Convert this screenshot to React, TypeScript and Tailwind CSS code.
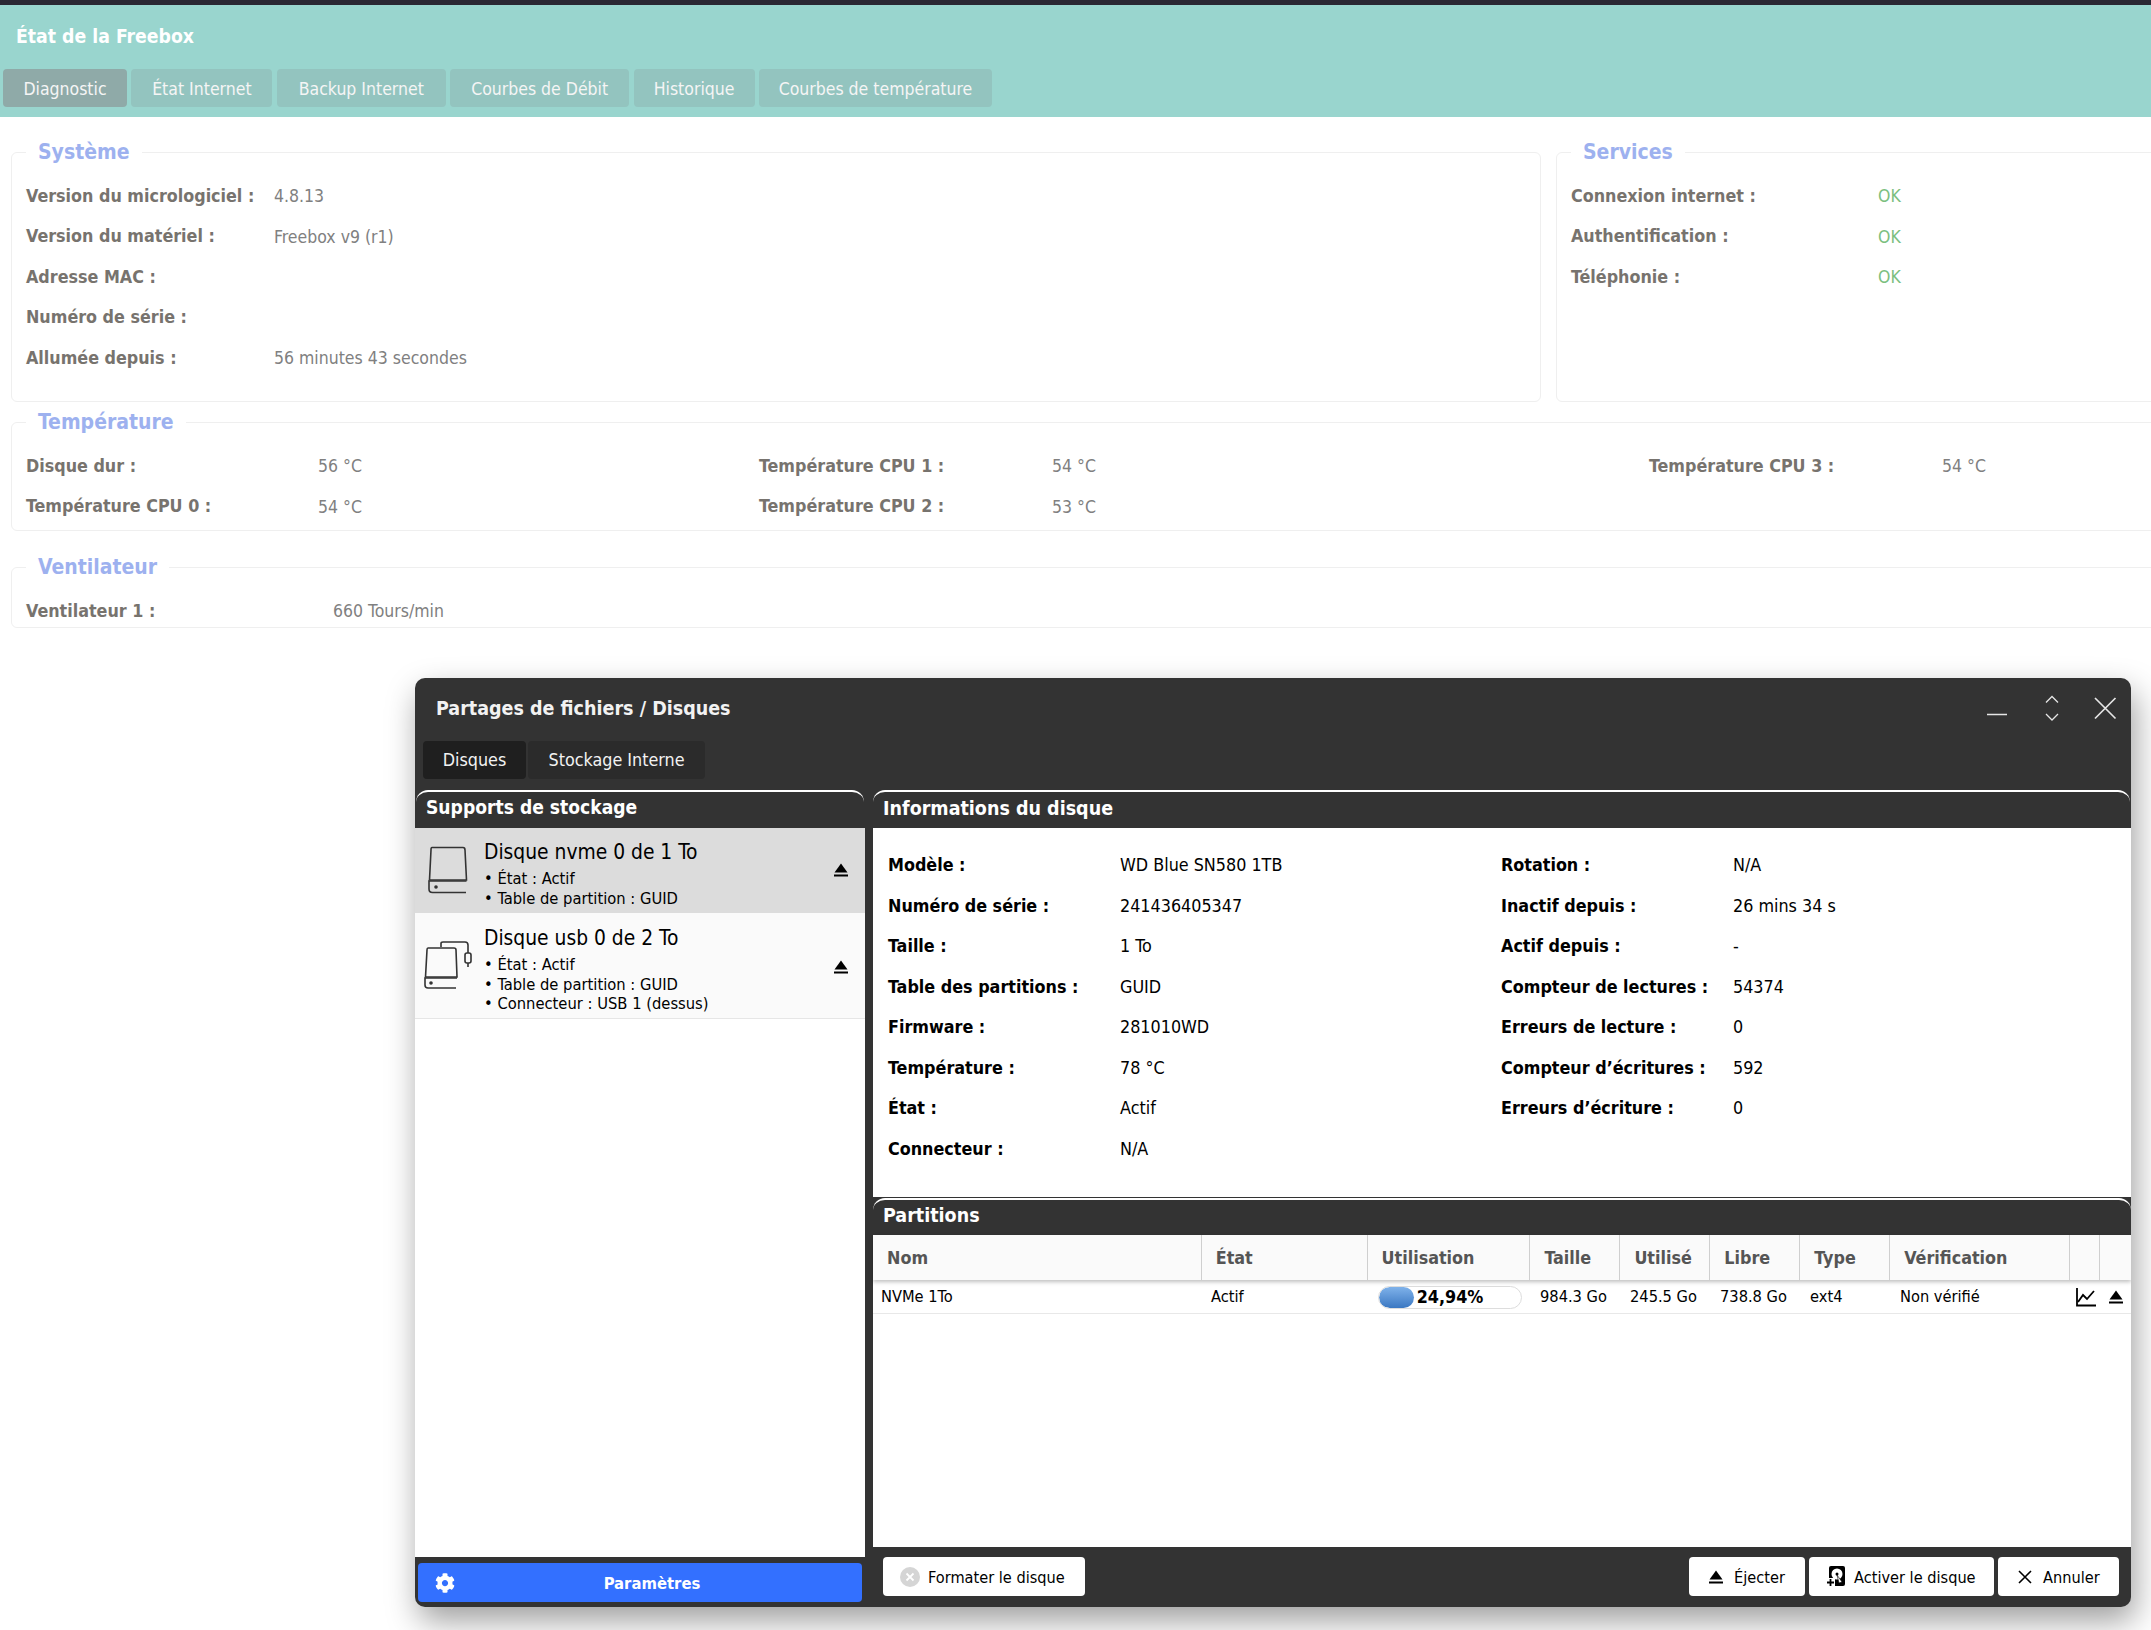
import { FaCog } from 'react-icons/fa';

const TOP_TABS = [
  { label: 'Diagnostic', width: 'w-[124px]', active: true },
  { label: 'État Internet', width: 'w-[141px]', active: false },
  { label: 'Backup Internet', width: 'w-[169px]', active: false },
  { label: 'Courbes de Débit', width: 'w-[179px]', active: false },
  { label: 'Historique', width: 'w-[121px]', active: false },
  { label: 'Courbes de température', width: 'w-[233px]', active: false },
];

const SYSTEM_ROWS = [
  ['Version du micrologiciel :', '4.8.13'],
  ['Version du matériel :', 'Freebox v9 (r1)'],
  ['Adresse MAC :', ''],
  ['Numéro de série :', ''],
  ['Allumée depuis :', '56 minutes 43 secondes'],
];

const SERVICE_ROWS = ['Connexion internet :', 'Authentification :', 'Téléphonie :'];

const TEMP_CELLS = [
  ['Disque dur :', '56 °C'],
  ['Température CPU 1 :', '54 °C'],
  ['Température CPU 3 :', '54 °C'],
  ['Température CPU 0 :', '54 °C'],
  ['Température CPU 2 :', '53 °C'],
];

const INFO_LEFT = [
  ['Modèle :', 'WD Blue SN580 1TB'],
  ['Numéro de série :', '241436405347'],
  ['Taille :', '1 To'],
  ['Table des partitions :', 'GUID'],
  ['Firmware :', '281010WD'],
  ['Température :', '78 °C'],
  ['État :', 'Actif'],
  ['Connecteur :', 'N/A'],
];

const INFO_RIGHT = [
  ['Rotation :', 'N/A'],
  ['Inactif depuis :', '26 mins 34 s'],
  ['Actif depuis :', '-'],
  ['Compteur de lectures :', '54374'],
  ['Erreurs de lecture :', '0'],
  ['Compteur d’écritures :', '592'],
  ['Erreurs d’écriture :', '0'],
];

const PARTITION_COLS = [
  { label: 'Nom', width: 'w-[329px]' },
  { label: 'État', width: 'w-[166px]' },
  { label: 'Utilisation', width: 'w-[163px]' },
  { label: 'Taille', width: 'w-[90px]' },
  { label: 'Utilisé', width: 'w-[90px]' },
  { label: 'Libre', width: 'w-[90px]' },
  { label: 'Type', width: 'w-[90px]' },
  { label: 'Vérification', width: 'w-[180px]' },
  { label: '', width: 'w-[30px]' },
  { label: '', width: 'w-[31px]' },
];

function EjectIcon({ className = 'h-[14px] w-[14px]' }: { className?: string }) {
  return (
    <svg viewBox="0 0 14 14" className={className} fill="#000">
      <path d="M7 0.5 L13.5 9.5 H0.5 Z" />
      <rect x="0" y="11.5" width="14" height="2" />
    </svg>
  );
}

function DiskIcon() {
  return (
    <svg viewBox="0 0 40 48" className="h-[48px] w-[40px]" fill="none" stroke="#333" strokeWidth="1.6">
      <path d="M4 1.500 H35 Q37 1.500 37 4 L38.500 34 H1.500 L3 4 Q3 1.500 4 1.500 Z" />
      <path d="M38.500 35 H1 V43 Q1 46.500 4.500 46.500 H38" />
      <circle cx="8" cy="41" r="1.800" fill="#333" stroke="none" />
    </svg>
  );
}

function UsbDiskIcon() {
  return (
    <svg viewBox="0 0 48 48" className="h-[48px] w-[48px]" fill="none" stroke="#333" strokeWidth="1.6">
      <path d="M4 7 H30 Q32 7 32 9 L33 36 H1.500 L3 9 Q3 7 4 7 Z" />
      <path d="M33 37 H1 V44 Q1 47 4 47 H32" />
      <circle cx="7" cy="42" r="1.800" fill="#333" stroke="none" />
      <path d="M17 6 V2.500 Q17 1 19 1 H41 Q44 1 44 4 V12" />
      <rect x="41" y="12" width="6" height="10" rx="2" />
      <path d="M44 22 V26" />
    </svg>
  );
}

function ActivateIcon() {
  return (
    <svg viewBox="0 0 19 21" className="h-[21px] w-[19px]">
      <rect x="3" y="0" width="16" height="20" rx="2" fill="#000" />
      <circle cx="11" cy="8" r="5.500" fill="#fff" />
      <circle cx="11" cy="8" r="1.500" fill="#000" />
      <path d="M11 9 L16 16 L13 17 Z" fill="#fff" stroke="#000" strokeWidth="0.6" />
      <rect x="0" y="12" width="9" height="9" fill="#fff" />
      <path d="M1 16.500 H8 M4.500 13 V20" stroke="#000" strokeWidth="1.800" />
    </svg>
  );
}

function SectionHeader({ title, className = '' }: { title: string; className?: string }) {
  return (
    <div className={`flex items-center rounded-t-[12px] border-t-2 border-white bg-[#333] pb-[3px] pl-[10px] font-bold text-white ${className}`}>
      {title}
    </div>
  );
}

function Fieldset({
  title,
  className,
  children,
}: {
  title: string;
  className: string;
  children: React.ReactNode;
}) {
  return (
    <fieldset className={`rounded-[6px] border border-[#efefef] ${className}`}>
      <legend className="px-[12px] text-[21px] font-bold leading-[28px] text-[#9db1ef]">{title}</legend>
      {children}
    </fieldset>
  );
}

function FooterButton({
  icon,
  label,
  className,
}: {
  icon: React.ReactNode;
  label: string;
  className: string;
}) {
  return (
    <button className={`flex h-[39px] items-center rounded-[4px] bg-white text-[16.200px] text-black ${className}`}>
      {icon}
      <span className="pt-[3px]">{label}</span>
    </button>
  );
}

function DiskItem({
  icon,
  title,
  lines,
  className,
  iconClass,
  textClass,
  ejectClass,
}: {
  icon: React.ReactNode;
  title: string;
  lines: string[];
  className: string;
  iconClass: string;
  textClass: string;
  ejectClass: string;
}) {
  return (
    <div className={`relative flex ${className}`}>
      <div className={iconClass}>{icon}</div>
      <div className={`absolute left-[69px] ${textClass}`}>
        <div className="text-[20.800px] leading-[28px] text-black">{title}</div>
        <div className="mt-[3px] text-[16.400px] leading-[19.500px] text-black">
          {lines.map((line) => (
            <div key={line}>• {line}</div>
          ))}
        </div>
      </div>
      <div className={`absolute left-[419px] ${ejectClass}`}>
        <EjectIcon />
      </div>
    </div>
  );
}

export default function App() {
  return (
    <div className="relative h-[1630px] w-[2151px] overflow-hidden bg-white [font-family:'DejaVu_Sans_Condensed','DejaVu_Sans',sans-serif]">
      <div className="h-[5px] bg-[#2a2833]" />

      {/* Freebox status page */}
      <div className="h-[112px] bg-[#99d5ce]">
        <div className="flex h-[64px] items-center pl-[16px] text-[19.250px] font-bold text-white">État de la Freebox</div>
        <div className="flex gap-[4.400px] pl-[3px]">
          {TOP_TABS.map((tab) => (
            <div
              key={tab.label}
              className={`flex h-[38px] shrink-0 items-center justify-center rounded-[4px] pt-[2px] text-[17.500px] text-[#f5f5f5] ${tab.width} ${tab.active ? 'bg-[#8faaa8]' : 'bg-[#93c4bf]'}`}
            >
              {tab.label}
            </div>
          ))}
        </div>
      </div>

      <div className="pl-[11px] pt-[21px]">
        <div className="flex gap-[15px]">
          <Fieldset title="Système" className="h-[264px] w-[1530px] shrink-0 pl-[14px] pt-[10px]">
            {SYSTEM_ROWS.map(([label, value]) => (
              <div key={label} className="flex h-[40.500px] items-center">
                <span className="w-[248px] text-[17.750px] font-bold text-[#77736e]">{label}</span>
                <span className="text-[17.500px] text-[#808080]">{value}</span>
              </div>
            ))}
          </Fieldset>
          <Fieldset title="Services" className="h-[264px] w-[700px] shrink-0 pl-[14px] pt-[10px]">
            {SERVICE_ROWS.map((label) => (
              <div key={label} className="flex h-[40.500px] items-center">
                <span className="w-[307px] text-[17.750px] font-bold text-[#77736e]">{label}</span>
                <span className="text-[17.500px] text-[#7cc07f]">OK</span>
              </div>
            ))}
          </Fieldset>
        </div>

        <Fieldset title="Température" className="mt-[6px] h-[123px] w-[2300px] pl-[14px] pt-[10px]">
          <div className="grid auto-rows-[40.500px] grid-cols-[292px_441px_293px_597px_293px_100px] items-center">
            {TEMP_CELLS.map(([label, value], i) => (
              <div key={label} className="contents">
                <span className={`text-[17.750px] font-bold text-[#77736e] ${i === 3 ? 'col-start-1 row-start-2' : ''} ${i === 4 ? 'col-start-3 row-start-2' : ''}`}>{label}</span>
                <span className="text-[17.500px] text-[#808080]">{value}</span>
              </div>
            ))}
          </div>
        </Fieldset>

        <Fieldset title="Ventilateur" className="mt-[22px] h-[75px] w-[2300px] pl-[14px] pt-[12px]">
          <div className="flex h-[36px] items-center">
            <span className="w-[307px] text-[17.750px] font-bold text-[#77736e]">Ventilateur 1 :</span>
            <span className="text-[17.500px] text-[#808080]">660 Tours/min</span>
          </div>
        </Fieldset>
      </div>

      {/* File share window */}
      <div className="absolute left-[415px] top-[678px] flex h-[929px] w-[1716px] flex-col overflow-hidden rounded-[10px] bg-[#333] shadow-[4px_14px_32px_rgba(0,0,0,0.38)]">
        <div className="relative flex h-[63px] shrink-0 items-center pb-[2px] pl-[21px] text-[19.500px] font-bold text-[#f2f2f2]">
          Partages de fichiers / Disques
          <svg viewBox="0 0 132 30" className="absolute left-[1572px] top-[16px] h-[30px] w-[132px]" fill="none" stroke="#e6e6e6" strokeWidth="1.300">
            <path d="M0 20.500 H20" strokeWidth="1.600" />
            <path d="M59 8.500 L65 2.500 L71 8.500 M59 20 L65 26 L71 20" />
            <path d="M108 4 L128.500 24.500 M128.500 4 L108 24.500" strokeWidth="1.700" />
          </svg>
        </div>

        <div className="flex h-[38px] shrink-0 gap-[2px] pl-[8px] text-[17.800px] text-[#f2f2f2]">
          <div className="flex w-[103px] items-center justify-center rounded-[4px] bg-[#1f1f1f]">Disques</div>
          <div className="flex w-[177px] items-center justify-center rounded-[4px] bg-[#2b2b2b]">Stockage Interne</div>
        </div>

        <div className="mt-[11px] flex min-h-0 flex-1">
          {/* Storage list */}
          <div className="flex w-[450px] shrink-0 flex-col">
            <SectionHeader title="Supports de stockage" className="mx-[1px] h-[38px] text-[19.100px]" />
            <div className="flex-1 bg-white">
              <DiskItem
                icon={<DiskIcon />}
                title="Disque nvme 0 de 1 To"
                lines={['État : Actif', 'Table de partition : GUID']}
                className="h-[85px] bg-[#dcdcdc]"
                iconClass="ml-[13px] mt-[18px]"
                textClass="top-[10px]"
                ejectClass="top-[35px]"
              />
              <DiskItem
                icon={<UsbDiskIcon />}
                title="Disque usb 0 de 2 To"
                lines={['État : Actif', 'Table de partition : GUID', 'Connecteur : USB 1 (dessus)']}
                className="h-[106px] border-b border-[#e6e6e6] bg-[#fafafa]"
                iconClass="ml-[9px] mt-[28px]"
                textClass="top-[11px]"
                ejectClass="top-[47px]"
              />
            </div>
            <div className="flex h-[50px] shrink-0 items-start px-[3px] pt-[6px]">
              <div className="relative flex h-[39px] w-full items-center justify-center rounded-[4px] bg-[#3370ff] pl-[24px] pt-[4px] text-[16.500px] font-bold text-white">
                <FaCog className="absolute left-[17px] top-[10px] h-[20px] w-[20px]" />
                Paramètres
              </div>
            </div>
          </div>

          {/* Disk details */}
          <div className="ml-[8px] flex min-w-0 flex-1 flex-col">
            <SectionHeader title="Informations du disque" className="mr-[1px] h-[38px] text-[19.500px]" />

            <div className="flex h-[369px] shrink-0 bg-white pl-[15px] pt-[17.500px] text-[17.800px] text-black">
              <div className="w-[613px]">
                {INFO_LEFT.map(([label, value]) => (
                  <div key={label} className="flex h-[40.500px] items-center">
                    <span className="w-[232px] font-bold">{label}</span>
                    <span>{value}</span>
                  </div>
                ))}
              </div>
              <div>
                {INFO_RIGHT.map(([label, value]) => (
                  <div key={label} className="flex h-[40.500px] items-center">
                    <span className="w-[232px] font-bold">{label}</span>
                    <span>{value}</span>
                  </div>
                ))}
              </div>
            </div>

            <div className="h-[1px] shrink-0" />
            <SectionHeader title="Partitions" className="h-[37px] shrink-0 text-[19.500px]" />

            <div className="relative z-10 flex h-[45px] shrink-0 bg-[#fafafa] shadow-[0_2px_4px_rgba(0,0,0,0.25)]">
              {PARTITION_COLS.map((col, i) => (
                <div
                  key={i}
                  className={`flex items-center border-r border-[#cfcfcf] pl-[14px] pt-[2px] text-[17.800px] font-bold text-[#555] last:border-r-0 ${col.width}`}
                >
                  {col.label}
                </div>
              ))}
            </div>

            <div className="flex h-[34px] shrink-0 items-center border-b border-[#e8e8e8] bg-white pt-[1px] text-[16.300px] text-black">
              <span className="w-[329px] pl-[8px]">NVMe 1To</span>
              <span className="w-[166px] pl-[9px]">Actif</span>
              <div className="w-[163px] pl-[10px]">
                <div className="relative h-[23px] w-[144px] overflow-hidden rounded-full border border-[#ddd] bg-white">
                  <div className="h-full rounded-full bg-gradient-to-b from-[#7fb2ea] to-[#3b78c2]" style={{ width: '24.94%' }} />
                  <span className="absolute inset-0 flex items-center justify-center text-[17.800px] font-bold leading-none text-black">24,94%</span>
                </div>
              </div>
              <span className="w-[90px] pl-[9px]">984.3 Go</span>
              <span className="w-[90px] pl-[9px]">245.5 Go</span>
              <span className="w-[90px] pl-[9px]">738.8 Go</span>
              <span className="w-[90px] pl-[9px]">ext4</span>
              <span className="w-[180px] pl-[9px]">Non vérifié</span>
              <svg viewBox="0 0 20 20" className="ml-[5px] h-[20px] w-[20px]" fill="none" stroke="#000" strokeWidth="1.800">
                <path d="M1 1 V18.500 H20" />
                <path d="M2 15 L7 8 L11 12 L18 4" />
              </svg>
              <EjectIcon className="ml-[13px] h-[14px] w-[14px]" />
            </div>

            <div className="flex-1 bg-white" />

            <div className="flex h-[60px] shrink-0 items-start justify-between pl-[10px] pr-[12px] pt-[10px]">
              <FooterButton
                className="w-[202px] pl-[17px]"
                label="Formater le disque"
                icon={
                  <svg viewBox="0 0 20 20" className="mr-[8px] h-[20px] w-[20px]">
                    <circle cx="10" cy="10" r="10" fill="#d5d5d5" />
                    <path d="M6.500 6.500 L13.500 13.500 M13.500 6.500 L6.500 13.500" stroke="#fff" strokeWidth="1.800" />
                  </svg>
                }
              />
              <div className="flex gap-[4px]">
                <FooterButton
                  className="w-[116px] pl-[20px]"
                  label="Éjecter"
                  icon={<EjectIcon className="mr-[11px] h-[14px] w-[14px]" />}
                />
                <FooterButton
                  className="w-[185px] pl-[17px]"
                  label="Activer le disque"
                  icon={
                    <span className="mr-[9px]">
                      <ActivateIcon />
                    </span>
                  }
                />
                <FooterButton
                  className="w-[121px] pl-[20px]"
                  label="Annuler"
                  icon={
                    <svg viewBox="0 0 14 14" className="mr-[11px] h-[14px] w-[14px]" fill="none" stroke="#000" strokeWidth="1.600">
                      <path d="M1 1 L13 13 M13 1 L1 13" />
                    </svg>
                  }
                />
              </div>
            </div>
          </div>
        </div>
      </div>
    </div>
  );
}
